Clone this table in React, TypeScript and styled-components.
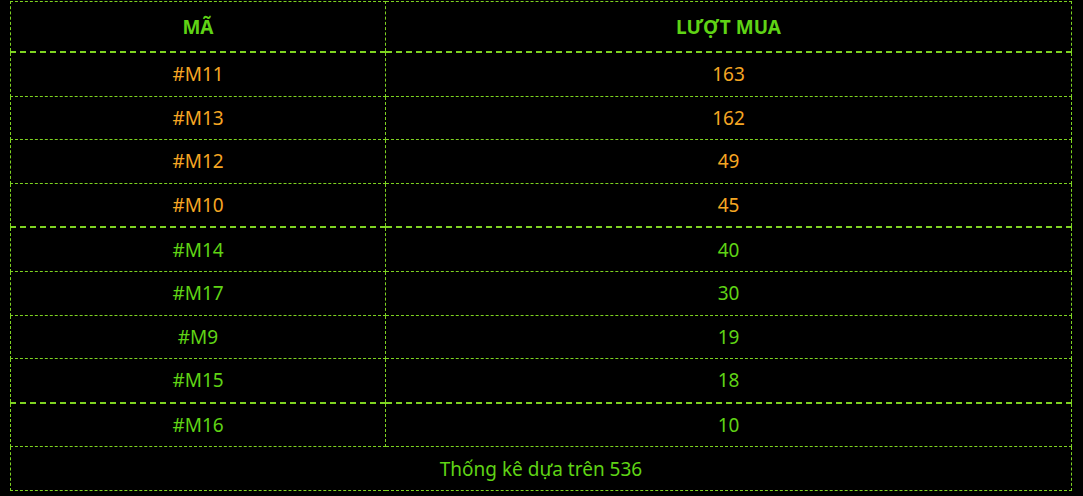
import React from 'react';
import styled, { createGlobalStyle } from 'styled-components';

interface IRow {
  code: string;
  count: number;
}

const rows: Array<IRow> = [
  { code: '#M11', count: 163 },
  { code: '#M13', count: 162 },
  { code: '#M12', count: 49 },
  { code: '#M10', count: 45 },
  { code: '#M14', count: 40 },
  { code: '#M17', count: 30 },
  { code: '#M9', count: 19 },
  { code: '#M15', count: 18 },
  { code: '#M16', count: 10 },
];

const GlobalStyle = createGlobalStyle`
  html, body {
    margin: 0;
    padding: 0;
    background: #000;
  }
  body {
    font-family: "Noto Sans", "Open Sans", sans-serif;
  }
`;

const App: React.FC = () => {
  return (
    <>
      <GlobalStyle />
      <Page>
        <Table>
          <thead>
            <tr>
              <Th style={{ width: 374 }}>MÃ</Th>
              <Th>LƯỢT MUA</Th>
            </tr>
          </thead>
          <tbody>
            {rows.map((v, i) => (
              <Row key={v.code} $thick={i === 3 || i === 7}>
                <Td $top={i < 4}>{v.code}</Td>
                <Td $top={i < 4}>{v.count}</Td>
              </Row>
            ))}
            <tr>
              <Footer colSpan={2}>Thống kê dựa trên 536</Footer>
            </tr>
          </tbody>
        </Table>
      </Page>
    </>
  );
};

export default App;

const Page = styled.div`
  padding: 1px 11px 0 10px;
`;

const Table = styled.table`
  width: 1062px;
  border-collapse: collapse;
  border: 1px dashed #7ed321;
  text-align: center;
`;

const Th = styled.th`
  height: 49px;
  padding: 0;
  border: 1px dashed #7ed321;
  border-bottom: 2px dashed #7ed321;
  color: #5fd315;
  font-size: 19px;
  font-weight: 700;
`;

const Row = styled.tr<{ $thick?: boolean }>`
  td {
    border-bottom: ${p => (p.$thick ? '2px' : '1px')} dashed #7ed321;
  }
`;

const Td = styled.td<{ $top?: boolean }>`
  height: 42.6px;
  padding: 0;
  border-left: 1px dashed #7ed321;
  border-right: 1px dashed #7ed321;
  color: ${p => (p.$top ? '#f5a623' : '#5fd315')};
  font-size: 19px;
`;

const Footer = styled.td`
  height: 42.6px;
  padding: 0;
  border: 1px dashed #7ed321;
  color: #5fd315;
  font-size: 19px;
`;
